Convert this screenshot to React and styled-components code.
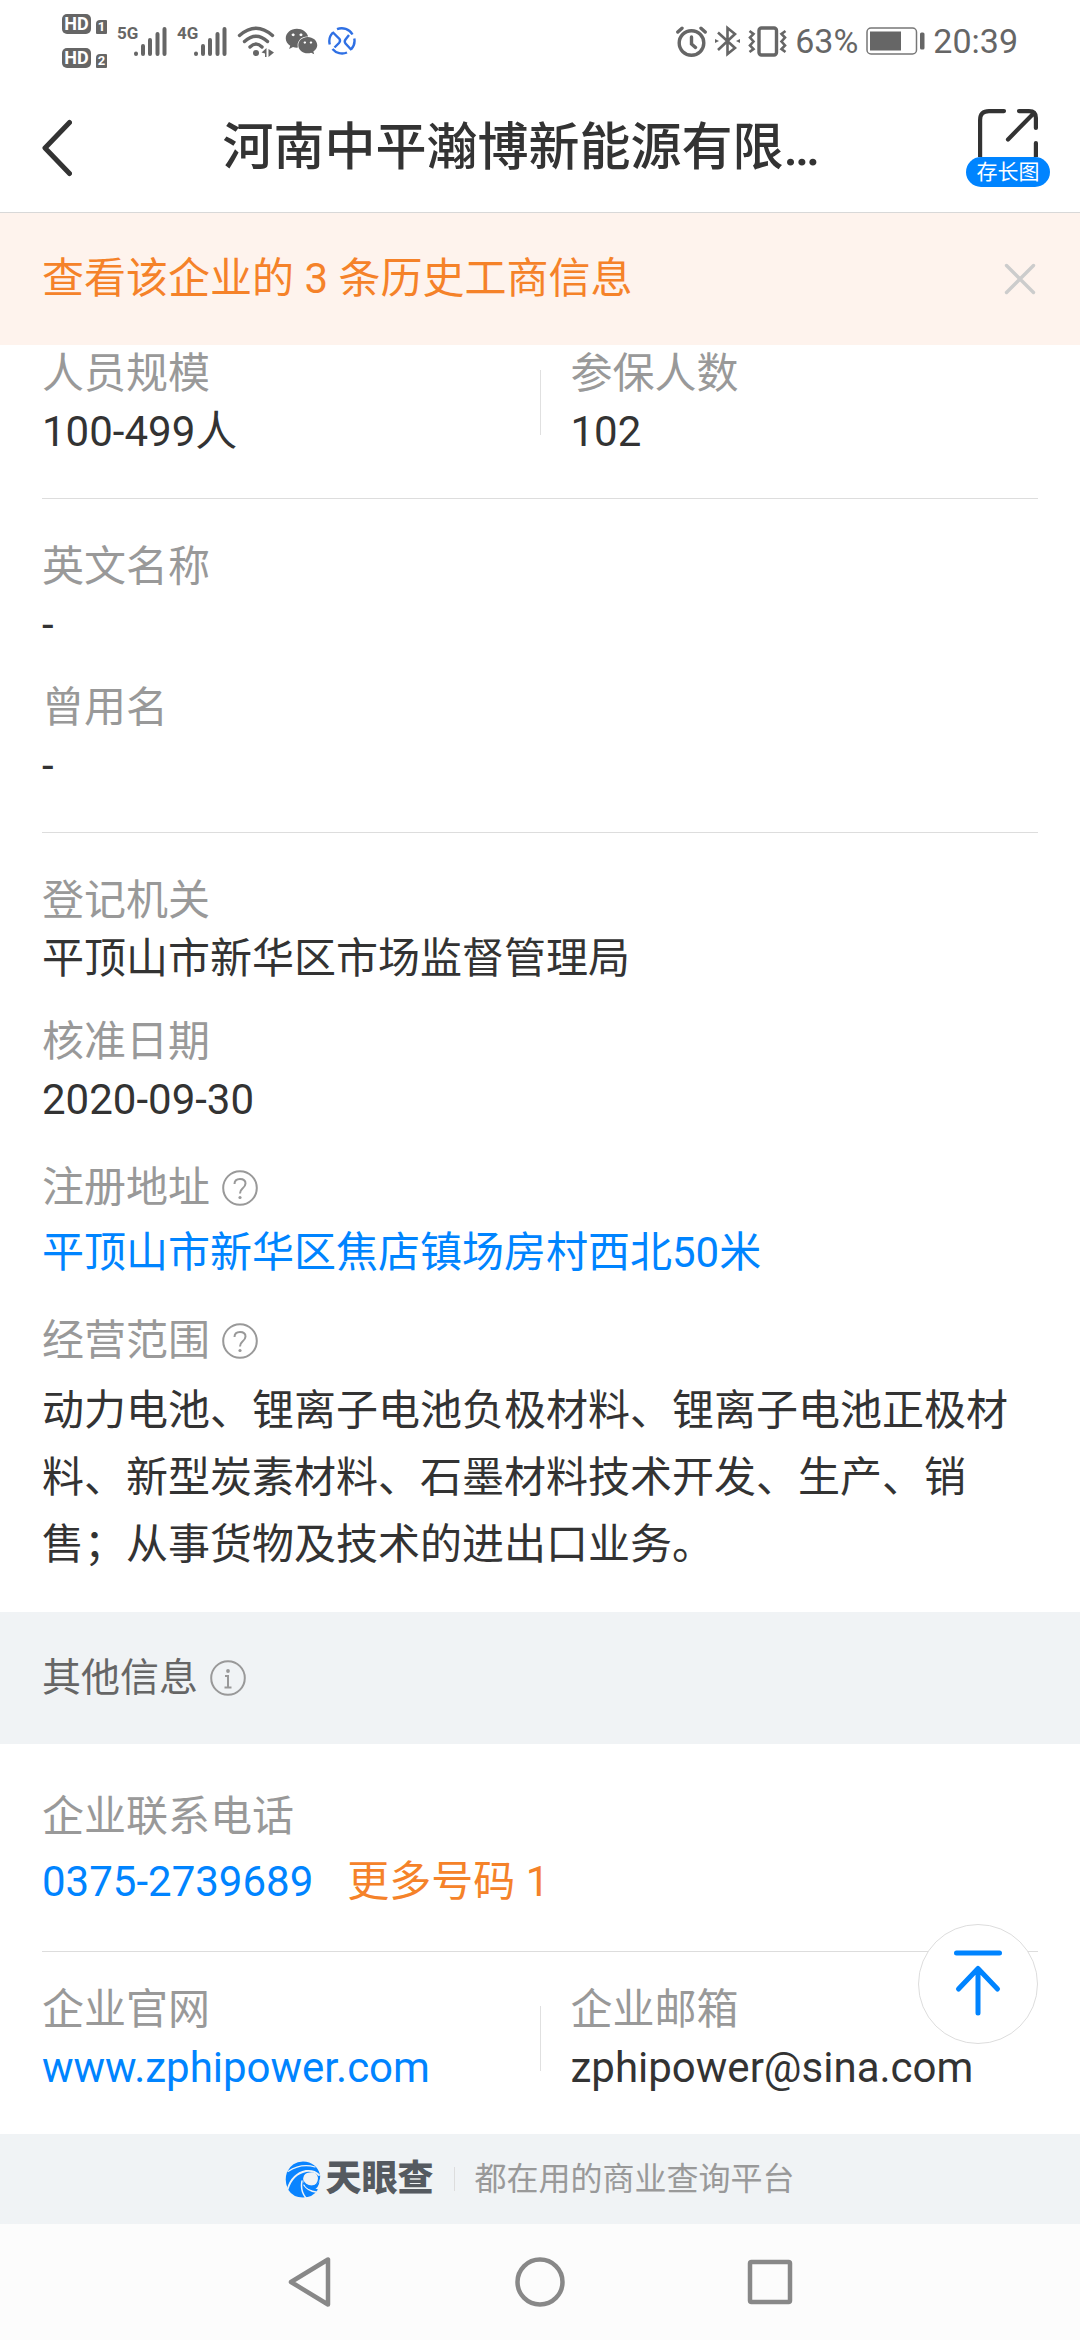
import React from 'react';
import styled, { createGlobalStyle } from 'styled-components';
import { FaWeixin } from 'react-icons/fa';

const GlobalStyle = createGlobalStyle`
  * {
    box-sizing: border-box;
  }

  body {
    margin: 0;
    background: #ffffff;
    color: #333333;
    font-family: Roboto, "Noto Sans CJK SC", sans-serif;
    font-size: 42px;
    line-height: 58px;
  }

  button {
    margin: 0;
    padding: 0;
    border: none;
    background: none;
    font: inherit;
    color: inherit;
    cursor: pointer;
  }

  svg {
    display: block;
    flex-shrink: 0;
  }
`;

const SignalIcon = () => (
  <svg width="33" height="31" viewBox="0 0 33 31" stroke="#666" strokeWidth="4" strokeLinecap="round">
    <path d="M2 27.5v.5M9 20v8M16 14v14M23.500 8v20M30.500 3v25" />
  </svg>
);

const WifiIcon = () => (
  <svg width="38" height="31" viewBox="0 0 38 31" fill="none" stroke="#666" strokeWidth="3.4" strokeLinecap="round">
    <path d="M2.500 9.500Q19-5 35.500 9.500M7.500 15.500Q19 5 30.500 15.500M13 21Q19 15 25 21" />
    <circle cx="19" cy="27" r="3" fill="#666" stroke="none" />
    <path d="M24.500 26.500L29.500 22V31H28V27.500ZM31.500 23V31L37 26.500Z" fill="#666" stroke="none" />
  </svg>
);

const CircleAppIcon = () => (
  <svg width="28" height="28" viewBox="0 0 28 28" fill="none" stroke="#2f70e4" strokeWidth="2.4">
    <path d="M9 2.200A12.500 12.500 0 0 1 24.500 7.500M26.300 11.500A12.500 12.500 0 0 1 23 22.500M19 25.500A12.500 12.500 0 0 1 4.500 22M1.800 17.500A12.500 12.500 0 0 1 5 5.500" />
    <path d="M4.500 5L11.500 12Q12.800 14 11 16L6.500 20.500M21 8L17.500 12.500Q16 14.500 17.500 16.500L23.500 23" />
  </svg>
);

const AlarmIcon = () => (
  <svg width="31" height="31" viewBox="0 0 31 31" fill="none" stroke="#666" strokeWidth="3.400" strokeLinecap="round">
    <circle cx="15.500" cy="17" r="12.300" />
    <path d="M15.500 11V18L19.500 21.500M1.800 6L6 2.200M29.200 6L25 2.200" />
  </svg>
);

const BluetoothIcon = () => (
  <svg width="25" height="32" viewBox="0 0 25 32" fill="none" stroke="#666" strokeWidth="2.600">
    <path d="M3 7.500L20 23L12.500 29V3L20 9L3 25" />
    <path d="M0 14L4 16L0 18ZM25 14L21 16L25 18Z" fill="#666" stroke="none" />
  </svg>
);

const VibrateIcon = () => (
  <svg width="39" height="31" viewBox="0 0 39 31" fill="none" stroke="#666" strokeWidth="3.400">
    <rect x="11" y="2" width="17.500" height="27" rx="2.500" />
    <path strokeWidth="2.600" d="M1.500 5L5.500 8L2 11.500L5.500 15.500L2 19.500L5.500 23L1.500 26M37.500 5L33.500 8L37 11.500L33.500 15.500L37 19.500L33.500 23L37.500 26" />
  </svg>
);

const BatteryIcon = () => (
  <svg width="59" height="28" viewBox="0 0 59 28">
    <rect x="1" y="1" width="49.500" height="26" rx="4" fill="none" stroke="#777" strokeWidth="1.500" />
    <rect x="4" y="4.500" width="31" height="19" fill="#666" />
    <rect x="54" y="5.500" width="4.500" height="17" rx="1.500" fill="#666" />
  </svg>
);

const BackIcon = () => (
  <svg width="30" height="58" viewBox="0 0 30 58" fill="none" stroke="#333" strokeWidth="5" strokeLinecap="round" strokeLinejoin="round">
    <path d="M27.500 3.500L3 29L27.500 54.500" />
  </svg>
);

const ShareIcon = () => (
  <svg width="60" height="48" viewBox="0 0 60 48" fill="none" stroke="#333" strokeWidth="4.200" strokeLinecap="round" strokeLinejoin="round">
    <path d="M26 2.100H11Q2.100 2.100 2.100 11V50M41 2.100H51Q57.900 2.100 57.900 9V19M57.900 34V50M56 4L30 30.500" />
  </svg>
);

const CloseIcon = () => (
  <svg width="32" height="32" viewBox="0 0 32 32" stroke="#ccc" strokeWidth="3.400" strokeLinecap="round">
    <path d="M2.500 2.500L29.500 29.500M29.500 2.500L2.500 29.500" />
  </svg>
);

const HelpIcon = () => (
  <svg width="36" height="36" viewBox="0 0 36 36" fill="none" stroke="#999" strokeWidth="2">
    <circle cx="18" cy="18" r="16.800" />
    <path d="M12.500 14Q12.500 9 18 9Q23.500 9 23.500 13.500Q23.500 16 20.500 18.500Q18 20.500 18 23.500" />
    <circle cx="18" cy="27.500" r="1.600" fill="#999" stroke="none" />
  </svg>
);

const InfoIcon = () => (
  <svg width="36" height="36" viewBox="0 0 36 36" fill="none" stroke="#999" strokeWidth="2">
    <circle cx="18" cy="18" r="16.800" />
    <path d="M15 16H18V27M14.500 27.500H21.500" />
    <circle cx="18" cy="11" r="1.900" fill="#999" stroke="none" />
  </svg>
);

const TopIcon = () => (
  <svg width="50" height="68" viewBox="0 0 50 68" fill="none" stroke="#0084ff" strokeWidth="5" strokeLinecap="round" strokeLinejoin="round">
    <path d="M3.500 3H46.500M25 19V63M5.500 39L25 18.500L44.500 39" />
  </svg>
);

const BrandLogo = () => (
  <svg width="36" height="37" viewBox="0 0 36 37">
    <path d="M18 .5C27 .5 33 6 35 13.500C36 20 32 25 26 26L33 28.500Q28 36.500 18 36.500Q8 36.500 3 28.500Q-1 20 2 11Q7 .5 18 .5Z" fill="#0a84ff" />
    <g fill="none" stroke="#f0f3f5" strokeLinecap="round">
      <path d="M3 10.500Q16 2 30 6" strokeWidth="1.200" />
      <path d="M2.500 28.500Q7 13 21 10Q29 9 34 14" strokeWidth="1.800" />
      <path d="M17 20Q15 30 21 37" strokeWidth="1.500" />
      <path d="M19 24Q23 30 31 31" strokeWidth="1.400" />
    </g>
    <path d="M22 12Q32 9 33 17Q33 24 26 25Q19 25 18 20Q18 13 22 12Z" fill="#f0f3f5" />
    <path d="M18 18Q20 24 27 24.500Q32 24 34.500 20Q34 27 28 29Q19 29 18 18Z" fill="#0a84ff" />
  </svg>
);

const Field = ({ label, help, loose, children }) => (
  <FieldBox $loose={loose}>
    <Label>
      {label}
      {help && (
        <button type="button" aria-label={label}>
          <HelpIcon />
        </button>
      )}
    </Label>
    {children}
  </FieldBox>
);

const App = () => {
  return (
    <Page>
      <GlobalStyle />
      <StatusBar>
        <StatusGroup $gap={10}>
          <HdColumn>
            <HdRow><HdBadge>HD</HdBadge><SimBadge>1</SimBadge></HdRow>
            <HdRow><HdBadge>HD</HdBadge><SimBadge>2</SimBadge></HdRow>
          </HdColumn>
          <Network><NetworkType>5G</NetworkType><SignalIcon /></Network>
          <Network><NetworkType>4G</NetworkType><SignalIcon /></Network>
          <WifiIcon />
          <FaWeixin size={33} />
          <CircleAppIcon />
        </StatusGroup>
        <StatusGroup $gap={8}>
          <AlarmIcon />
          <BluetoothIcon />
          <VibrateIcon />
          <span>63%</span>
          <BatteryIcon />
          <span>20:39</span>
        </StatusGroup>
      </StatusBar>

      <Header>
        <button type="button" aria-label="返回"><BackIcon /></button>
        <Title>河南中平瀚博新能源有限…</Title>
        <ShareButton type="button">
          <ShareIcon />
          <Pill>存长图</Pill>
        </ShareButton>
      </Header>

      <Banner>
        <BannerLink href="#history">查看该企业的 3 条历史工商信息</BannerLink>
        <button type="button" aria-label="关闭"><CloseIcon /></button>
      </Banner>

      <Main>
        <Section>
          <Columns>
            <Field label="人员规模"><Value>100-499人</Value></Field>
            <ColumnLine />
            <Field label="参保人数"><Value>102</Value></Field>
          </Columns>
        </Section>
        <Line />
        <Section $top={39}>
          <Field label="英文名称"><Value>-</Value></Field>
          <Field label="曾用名"><Value>-</Value></Field>
        </Section>
        <Line />
        <Section $top={39} $bottom={34}>
          <Field label="登记机关"><Value>平顶山市新华区市场监督管理局</Value></Field>
          <Field label="核准日期"><Value>2020-09-30</Value></Field>
          <Field label="注册地址" help loose>
            <Value><Link href="#address">平顶山市新华区焦店镇场房村西北50米</Link></Value>
          </Field>
          <Field label="经营范围" help loose>
            <Paragraph>
              动力电池、锂离子电池负极材料、锂离子电池正极材料、新型炭素材料、石墨材料技术开发、生产、销售；从事货物及技术的进出口业务。
            </Paragraph>
          </Field>
        </Section>

        <GroupTitle>
          其他信息
          <button type="button" aria-label="其他信息"><InfoIcon /></button>
        </GroupTitle>

        <Section $top={44} $bottom={40}>
          <Field label="企业联系电话" loose>
            <PhoneRow>
              <Link href="tel:0375-2739689">0375-2739689</Link>
              <MoreButton type="button">更多号码 1</MoreButton>
            </PhoneRow>
          </Field>
        </Section>
        <Line />
        <Section $top={29}>
          <Columns>
            <Field label="企业官网">
              <Value><Link href="#website">www.zphipower.com</Link></Value>
            </Field>
            <ColumnLine />
            <Field label="企业邮箱"><Value>zphipower@sina.com</Value></Field>
          </Columns>
        </Section>
        <TopButton type="button" aria-label="回到顶部"><TopIcon /></TopButton>
      </Main>

      <Footer>
        <Brand><BrandLogo />天眼查</Brand>
        <FooterLine />
        <span>都在用的商业查询平台</span>
      </Footer>

      <NavBar>
        <NavButton type="button" aria-label="返回">
          <svg width="46" height="52" viewBox="0 0 46 52" fill="none" stroke="#888" strokeWidth="4.500" strokeLinejoin="round">
            <path d="M41 3.500V48.500L4 26Z" />
          </svg>
        </NavButton>
        <NavButton type="button" aria-label="主屏幕">
          <svg width="50" height="50" viewBox="0 0 50 50" fill="none" stroke="#888" strokeWidth="4.500">
            <circle cx="25" cy="25" r="22.500" />
          </svg>
        </NavButton>
        <NavButton type="button" aria-label="最近任务">
          <svg width="46" height="46" viewBox="0 0 46 46" fill="none" stroke="#888" strokeWidth="4.500">
            <rect x="3" y="3" width="40" height="40" rx="1.500" />
          </svg>
        </NavButton>
      </NavBar>
    </Page>
  );
};

const Page = styled.div`
  display: flex;
  flex-direction: column;
  min-height: 100vh;
`;

const StatusBar = styled.div`
  display: flex;
  align-items: center;
  justify-content: space-between;
  height: 82px;
  padding: 0 62px;
  color: #666666;
  font-size: 34px;
  line-height: 40px;
`;

const StatusGroup = styled.div`
  display: flex;
  align-items: center;
  gap: ${(props) => props.$gap}px;
`;

const HdColumn = styled.div`
  display: flex;
  flex-direction: column;
  gap: 14px;
`;

const HdRow = styled.div`
  display: flex;
  align-items: flex-end;
  gap: 5px;
`;

const HdBadge = styled.span`
  width: 29px;
  border-radius: 5px;
  background: #666666;
  color: #ffffff;
  font-size: 18px;
  font-weight: bold;
  line-height: 20px;
  text-align: center;
`;

const SimBadge = styled.span`
  width: 11px;
  border-radius: 4px 1px 1px 1px;
  background: #666666;
  color: #ffffff;
  font-size: 13px;
  font-weight: bold;
  line-height: 14px;
  text-align: center;
`;

const Network = styled.div`
  display: flex;
  align-items: flex-start;
`;

const NetworkType = styled.span`
  width: 17px;
  font-family: "Liberation Sans Narrow", Roboto, sans-serif;
  font-size: 17px;
  font-weight: bold;
  line-height: 14px;
`;

const Header = styled.header`
  display: flex;
  align-items: center;
  height: 131px;
  padding: 2px 30px 0 42px;
  border-bottom: 1px solid #d8d8d8;
`;

const Title = styled.h1`
  flex: 1;
  margin: 0;
  padding-left: 4px;
  font-size: 51px;
  font-weight: 500;
  text-align: center;
`;

const ShareButton = styled.button`
  display: flex;
  flex-direction: column;
  align-items: center;
`;

const Pill = styled.span`
  width: 84px;
  border-radius: 15px;
  background: #0084ff;
  color: #ffffff;
  font-size: 21px;
  line-height: 30px;
`;

const Banner = styled.div`
  display: flex;
  align-items: center;
  justify-content: space-between;
  height: 132px;
  padding: 0 44px 0 42px;
  background: #fef3ed;
`;

const BannerLink = styled.a`
  color: #f58229;
  text-decoration: none;
`;

const Main = styled.main`
  position: relative;
`;

const Section = styled.dl`
  display: flex;
  flex-direction: column;
  gap: 25px;
  margin: 0;
  padding: ${(props) => props.$top || 0}px 42px ${(props) => props.$bottom || 37}px;
`;

const Line = styled.div`
  height: 1px;
  margin: 0 42px;
  background: #dddddd;
`;

const Columns = styled.div`
  display: grid;
  grid-template-columns: 1fr 1px 1fr;
  column-gap: 30px;
`;

const ColumnLine = styled.div`
  height: 65px;
  margin-top: 25px;
  background: #e0e0e0;
`;

const FieldBox = styled.div`
  display: flex;
  flex-direction: column;
  gap: ${(props) => (props.$loose ? 7 : 0)}px;

  &:not(:first-child) {
    margin-top: ${(props) => (props.$loose ? 5 : 0)}px;
  }
`;

const Label = styled.dt`
  display: flex;
  align-items: center;
  gap: 12px;
  color: #999999;
`;

const Value = styled.dd`
  margin: 0;
`;

const Paragraph = styled(Value)`
  line-height: 67px;
`;

const PhoneRow = styled(Value)`
  display: flex;
  gap: 34px;
`;

const Link = styled.a`
  color: #0084ff;
  text-decoration: none;
`;

const MoreButton = styled.button`
  color: #f58229;
`;

const GroupTitle = styled.h2`
  display: flex;
  align-items: center;
  gap: 12px;
  height: 132px;
  margin: 0;
  padding: 0 42px;
  background: #f0f3f5;
  color: #666666;
  font-size: 39px;
  font-weight: normal;
`;

const TopButton = styled.button`
  position: absolute;
  right: 42px;
  bottom: 90px;
  display: flex;
  align-items: center;
  justify-content: center;
  width: 120px;
  height: 120px;
  border: 1px solid #dddddd;
  border-radius: 50%;
  background: #ffffff;
`;

const Footer = styled.footer`
  display: flex;
  align-items: center;
  justify-content: center;
  gap: 20px;
  height: 90px;
  background: #f0f3f5;
  color: #999999;
  font-size: 32px;
`;

const Brand = styled.div`
  display: flex;
  align-items: center;
  gap: 4px;
  color: #555a60;
  font-size: 36px;
  font-weight: 900;
`;

const FooterLine = styled.div`
  width: 1px;
  height: 24px;
  background: #dddddd;
`;

const NavBar = styled.nav`
  display: flex;
  flex: 1;
  align-items: center;
  justify-content: center;
  gap: 180px;
  min-height: 116px;
  background: #fcfcfc;
`;

const NavButton = styled.button`
  display: flex;
  align-items: center;
  justify-content: center;
  width: 50px;
  height: 52px;
`;

export default App;
